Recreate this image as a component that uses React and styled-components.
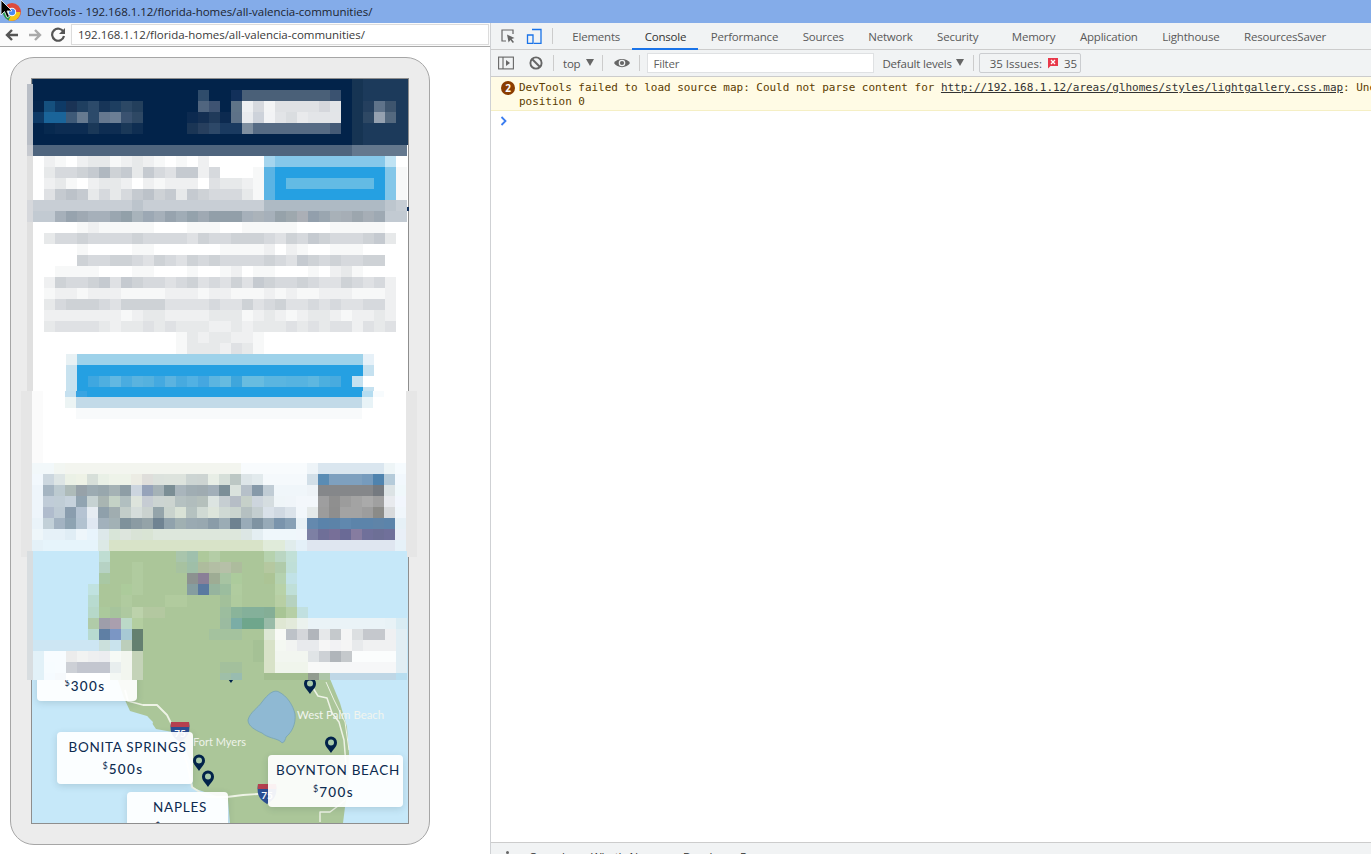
import React from 'react';
import styled, { createGlobalStyle } from 'styled-components';

const Global = createGlobalStyle`
  html, body { margin: 0; padding: 0; background: #fff; overflow: hidden; }
  * { box-sizing: border-box; }
`;

const UI = `"Open Sans", "Noto Sans", "Liberation Sans", sans-serif`;

const Root = styled.div`
  position: relative; width: 1371px; height: 854px; overflow: hidden;
  display: flex; flex-direction: column; font-family: ${UI}; color: #333;
`;
const TitleBar = styled.div`
  height: 23px; background: #84ace9; display: flex; align-items: center; padding-left: 3px; gap: 6px;
  font-size: 11.5px; letter-spacing: -0.03px; color: #1c2430; flex: none;
`;
const Body = styled.div`flex: 1; display: flex; min-height: 0;`;
const LeftPane = styled.div`width: 490px; flex: none; display: flex; flex-direction: column;`;
const NavBar = styled.div`
  height: 24px; flex: none; display: flex; align-items: center; padding: 0 1px 0 5px; background: #fbfbfb;
  border-bottom: 1px solid #a8a8a8;
`;
const NavIcons = styled.div`display: flex; align-items: center; gap: 9px; width: 66px; flex: none;`;
const UrlBox = styled.div`
  flex: 1; height: 21px; background: #fff; border: 1px solid #dcdcdc; padding-left: 6px;
  font-size: 11.5px; line-height: 19px; letter-spacing: -0.03px; color: #3a3a3a;
`;
const PagePane = styled.div`flex: 1; padding: 10px 0 0 10px; background: #fff;`;
const Phone = styled.div`
  position: relative; width: 420px; height: 788px; padding: 20px; background: #ececec;
  border: 1px solid #a6a6a6; border-radius: 24px;
`;
const Screen = styled.div`
  position: relative; width: 378px; height: 746px; border: 1px solid #8e8e8e; overflow: hidden; background: #fff;
`;
const MapArt = styled.svg`position: absolute; left: 0; top: 0; display: block;`;
const Mosaic = styled.svg`position: absolute; left: -1px; top: -1px; display: block; pointer-events: none;`;
const PlaceCard = styled.div`
  position: absolute; left: ${p => p.$x - 32}px; top: ${p => p.$y - 79}px; width: ${p => p.$w}px; height: 52px;
  background: rgba(255,255,255,.93); border-radius: 4px; box-shadow: 0 2px 7px rgba(40,60,70,.16);
  display: flex; flex-direction: column; align-items: center; justify-content: ${p => p.$end ? 'flex-end' : 'flex-start'};
  padding: ${p => p.$end ? '0 0 6px' : '7px 0 0'}; font-family: Lato, sans-serif; color: #0d2b50;
`;
const PlaceName = styled.div`font-size: 13.5px; line-height: 17px; letter-spacing: 0.72px; white-space: nowrap; font-weight: 400; margin-left: 5px;`;
const PlacePrice = styled.div`
  margin: 3.5px 4px 0 0; font-size: 13.5px; line-height: 18px; letter-spacing: 1.4px; font-weight: 500;
  sup { font-size: 9px; font-weight: 400; vertical-align: 5px; line-height: 0; letter-spacing: 1px; }
`;
const DevTools = styled.div`flex: 1; display: flex; flex-direction: column; border-left: 1px solid #cfd1d4; min-width: 0;`;
const TabBar = styled.div`
  height: 27px; flex: none; display: flex; align-items: stretch; background: #f1f3f4; border-bottom: 1px solid #ccc; padding-left: 9px;
`;
const IconSlot = styled.div`
  display: flex; align-items: center; justify-content: center; flex: none; width: ${p => p.$w}px; margin-left: ${p => p.$ml || 0}px;
`;
const Divider = styled.div`
  width: 1px; height: 16px; background: #ccc; align-self: center; flex: none; margin: 0 ${p => p.$r ?? 7}px 0 ${p => p.$l ?? 7}px;
`;
const Tab = styled.div`
  flex: none; padding: 0 12.25px; margin-left: ${p => p.$gap || 0}px; height: 27px; line-height: 27px; font-size: 11.5px; letter-spacing: -0.2px;
  color: ${p => p.$active ? '#333' : '#5a5a5a'};
  box-shadow: ${p => p.$active ? 'inset 0 -2px 0 #1a73e8' : 'none'};
`;
const Toolbar = styled.div`
  height: 27px; flex: none; display: flex; align-items: center; background: #f1f3f4; border-bottom: 1px solid #ccc; padding-left: 7px;
  font-size: 11.5px; letter-spacing: -0.2px; color: #555;
`;
const Select = styled.div`
  display: flex; align-items: center; gap: ${p => p.$gap || 6}px; flex: none; margin-left: ${p => p.$ml || 0}px;
  &::after { content: ''; border-left: 4px solid transparent; border-right: 4px solid transparent; border-top: 7px solid #666; margin-top: -1px; }
`;
const Filter = styled.div`
  width: 227px; height: 20px; flex: none; background: #fff; border: 1px solid #dfe1e3; padding-left: 5px; line-height: 20px; color: #5f5f5f;
`;
const IssueBadge = styled.div`
  width: 102px; height: 20px; flex: none; display: flex; align-items: center; gap: 5px; padding-left: 10px;
  border: 1px solid #cbcdd0; border-radius: 2px; color: #555; letter-spacing: 0;
`;
const Message = styled.div`
  height: 34px; flex: none; position: relative; background: #fffbe5; border-bottom: 1px solid #f5efc4; padding: 4px 0 0 28px;
  font-family: "DejaVu Sans Mono", "Liberation Mono", monospace; font-size: 11px; letter-spacing: -0.03px; line-height: 14px; color: #5c3c00; white-space: nowrap; overflow: hidden;
  a { color: #333; text-decoration: underline; }
`;
const CountDot = styled.span`
  position: absolute; left: 10px; top: 4px; width: 14px; height: 14px; border-radius: 50%; background: #8a3c00; color: #fff;
  font: 700 10px/14px "Open Sans", sans-serif; text-align: center;
`;
const Prompt = styled.div`height: 20px; flex: none; padding: 5px 0 0 9px; display: flex; align-items: flex-start;`;
const ConsoleArea = styled.div`flex: 1; background: #fff;`;
const Drawer = styled.div`
  height: 12px; flex: none; background: #f1f3f4; border-top: 1px solid #ccc; overflow: hidden; position: relative;
  display: flex; font-size: 11.5px; color: #333; padding-left: 38px; line-height: 19px; letter-spacing: -0.1px; padding-top: 4px;
`;
const DrawerTab = styled.span`flex: none; width: ${p => p.$w}px; white-space: nowrap;`;
const DrawerDot = styled.span`position: absolute; left: 15px; top: 8px; width: 3px; height: 3px; border-radius: 50%; background: #666;`;
const CursorArt = styled.svg`position: absolute; left: 0; top: 0; display: block;`;

const L = 'abc699', S = 'c6e8f9', N = '02234a', M = '1c3a5b';
const gray = { 0: 'ffffff', 1: 'f7f8f8', 2: 'eff0f1', 3: 'e7e9ea', 4: 'dfe1e4', 5: 'd6d9dd', 6: 'ced2d6', 7: 'c5cad0', 8: 'bcc2c9', 9: 'b0b8c0' };
const BL = '25a0e2', LB = '84c7e9', D = '5bb4e4', E = '63bbe4';

const A = [
  [79, `${N}*29 163453 ${M}*4`],
  [90, `${N}*15 2f4c6b ${N}*2 12305a 4a6078*8 3a5270 ${N} 163453 ${M}*4`],
  [101, `04254c 15507e 0e3a66 1a3355 1f3f60 2c4a6a 173558 1d3e60 2c4865 233f5c ${N}*5 50657f 3e5372 ${N} 5f7488 eef0f2 d6d9de f3f4f5 dfe1e4*4 d5d7dc e2e5e8 ${N} 163453 243f5e 5f738a 3e556e ${M}`],
  [112, `0e3a66 1a6499*2 3e5a78 667a90 2c4a6a 66788f 6c7f95 3a5270 2e4864 ${N}*4 0c2a50 142f52 203a5a 0c2a50 5e7288 e9ebee cdd2da f2f3f5 e2e4e7 dadde0 e9eaec e3e5e8*3 ${N} 163453 2e4864 95a1b0 54697f ${M}`],
  [123, `${N} 07294f 0c2c52*3 1a3858 0e2d52*2 1a3858 0f2e52 ${N}*4 1a3555 273f5e 2d4868 1a3a60*2 7f8fa0 566b84*7 445a76 ${N} 163453 ${M}*4`],
  [134, `${N}*29 163453 ${M}*4`],
  [145, `4f657e*29 64788e*5`],
  [156, `~021023312321010200000 a5d5ee 86c8ea*10 bfe3f4 ffffff`],
  [167, `~035567967375477250001 ${D} ${BL}*10 ${LB} f7f8f8`],
  [178, `~023102332021222043321 ${D} ${BL} ${E}*8 ${BL} ${LB} f7f8f8`],
  [189, `~047873535786737655531 ${D} ${BL}*10 ${LB} f7f8f8`],
  [200, `c8ced5*9 bcc4cc c8ced5*11 aebac4*11 bdc6ce c6cdd4`],
  [211, `c2cad2*2 a6b0ba 97a3ae 9fa9b3 a6b0ba a6b0ba 9aa6b0 92a0a9 a8b3bb 9ca8b4 a6b0ba 97a3ae a0acb6 94a2ac 9fa9b3 929fa9 929fa9 929fa9 a6b0ba abb3ba a6b0ba 96a2aa 9ea8ae abafb6 929fac 9aa6b0 a8b1b8 a6aeb6 9ca6ae a6aeb6 9ea9b3 c2cad2*2`],
  [222, `~0000121111100011100111110001111100`],
  [233, `~0355655556555546556665465765556730`],
  [244, `~0000100001100000011112021001110000`],
  [255, `~0000655665465465655556547656556600`],
  [266, `~0011110001100010012011000102310000`],
  [277, `~0265567476554564546476556544654520`],
  [288, `~0122122211112221221112121122211120`],
  [299, `~0356665466664444544645644545445520`],
  [310, `~0222222212332222333123212332122320`],
  [321, `~0344443233434333223233343434424340`],
  [332, `~0000000000000132332210000000000000`],
  [343, `~0000000000000133324310000000000000`],
  [354, `ffffff*3 e8f1f4 9ed2ea*26 e7f1f8 ffffff*3`],
  [365, `ffffff*3 c8e2ef ${BL}*26 c5e1f0 ffffff*3`],
  [376, `ffffff*3 c8e2ef ${BL} 3fa7e0 4fafe0 62b8e2 4aace0 5ab3df 55b1de 44a9e0 5bb3e0 47aadf 52b1e3 45a7e0 5cb5e0 66bbe0 3fa6dc 68bce0*2 5ab5e0*2 56b3e0*2 5eb7e0 4cafdf 48abdf ${BL} c5e1f0 ffffff*3`],
];
const C = [
  [463, `f2f8fa*2 f2f6f2 f3f5ef*16 f8fbfd*6 eef4f8 dae6ef*6 eef5f7 f6fbfe`],
  [474, `f2f8fd ccd7df dde5e5 ebf1e6 eef2e6 d7dfd9 e9f0e6 eef3e9 eef3e9 ececE4 dfdedb dce2dd dde3dd dde3dd cdd5d3 cdd4d2 e8eee6 d6dfd9 bcc7c4 dde5e8 e2eaed f5f9fc*4 d2dfe8 5a8cb4 7ea0bf*3 769bbd 4f83ae b5cbda f2f8fd`],
  [485, `eef5fb a5b5c2 bccad0 aebbb9 97a2a9 9cabb2 98a7ad a5b2b5 8e9ea6 ccd5df 96a3ba a5b2b7 7b8e95 a9b5bc a0adb3 9fabb1 a2afb9 7c8f98 dae2dd b6c0c9 8699a9 c0ccd5 f0f6fa*3 eef3f7 85878a*5 757a80 dce3e5 f0f8fb`],
  [496, `eef5fb c0ccd8 c0cdd6 c6d2dc 91a4b1 c6d2d2 a9b5b2 c4d2c6 b1bfc0 dde4dc c6ccd3 ccd4d2 ccd4d0 b5c1c1 b1bdbd b5c0bc dce4e1 c6ced2 b6bdc6 c6d0c9 cdd5dd d5dde0 eff5f8 f0f5f9 f3f7fb f3f7fb 9e9e9f 8f8f8f 9c9c9c a3a3a3 aaaaaa a0a0a0 e8eaee f2f6fd`],
  [507, `eef5fb b0bccd bdcad4 8a9dae b5c3d2 e6ecf2 8fa0ab a0adb0 c2cdc9 d5dddb cad2cf 94a4aa c9d3cd d9e2d6 b5c2c0 d0dad4 dde5db cfd9d4 cad4ce b5c0c1 c4ced0 d9e1e9 d0d9e2 dbe3ea f2f7fb e4e9e9 9c9c9c 8e8e8e a3a3a3 a3a3a3 9d9d9d 8b8b88 d8dadc f0f6fb`],
  [518, `eaf3f9 c2d0d8 a3b3c2 8ea3b2 b2c2d0 e0e8f2 a2b1bc a2b1b5 7e919b 8b9ba3 94a3a8 6f8392 90a2ac a0b0b2 9aaab2 98a8b0 8a9ca8 9bacb5 6e8290 99abb8 7f93a2 97aab8 7a94ac 87a0b5 e8f1f6 6489ae 5a83aa 5c83a8 6088ae 5c84aa 5c84aa 5f84a8 5c84aa e6f0f6`],
  [529, `eef6fa e6f1f8*2 e0edf5 eef6fb e8f4fc dde8ea d8e5d8 dde5dd d9e3d6 d9e4d4 dde7dc*8 dce6e4 e4eef2 eff7fb*3 f0f6fb 7d80a4 6f6f98 776f98 6a6a96 867ca0 70709a 6d6f96 70709a e9eff7`],
  [540, `e4f1f8 e6f4fb*5 dce9e6 d8e3c8*14 e0ebda*2 e0ecec e4f0f8 dfe6f0*8 e6f1f8`],
];
const DD = [
  [551, `${S}*6 bfddd2 ${L}*6 a9c5ac 9fc0ad aec99b b4cda6 ${L}*4 b6d2ae bad6c2 c1e0d7 ${S}*10`],
  [562, `${S}*6 b6d2c4 ${L}*2 b0cb9f ${L}*3 a7c2a0 9fbfa8 aebc9d b3bea4 b6c0a8 adbc9d ${L}*2 b5c8a0 b0cbaa bfdfd8 ${S}*10`],
  [573, `${S}*6 a9c8a4 ${L}*2 b0cb9f ${L}*4 8c9290 8a7f97 9eac94 a7c4a2 accb9c ${L}*2 acc495 b5d2b0 c1e2e7 ${S}*10`],
  [584, `${S}*5 c0e2e0 ${L}*2 accb9b b0cb9f ${L}*4 859da0 5a79a0 96b49e 9bbd9e b0cc9f ${L}*3 b8d2a8 bfdfd8 ${S}*10`],
  [595, `${S}*5 b8dbd0 ${L}*2 b0cb9f ${L}*3 b1cb9e*2 ${L}*3 a2c09a afcb9e ${L}*3 b8cfa4 b6d2c0 ${S}*10`, 12],
  [607, `${S}*5 b6d8c9 abc99c a6c49c aec9a0 bcd2ab b3c8a0*2 ${L}*5 9cbd9e 8ab49a 84b09a*2 84ae96 a8c595 b6cfa6 c1e0e0 ${S}*9`],
  [618, `${S}*5 b0cba8 9e9eaa aa9fae bcd9c8 b3cea0 ${L}*7 9bbba0 7bada6 6fa68c*2 99bba8 dfe7d3 e3eadb ebf2ee eaf3f7*7 e8f2f6 d9ecf3`],
  [629, `${S}*5 b7dad0 5f7fa4 7b96c4 a7c9d4 648070 ${L}*6 a4c29e*3 ${L}*2 dde7d5 f8faf6 bdc2c8 d4d6da b1b5bb e6e8ea c5c9cc f4f5f5 dcdfe1 c5c8cd*2 eff0f2 e1eef4`],
  [640, `cde6f3*6 cbe0dc c9e3ed bccebb 648070 ${L}*10 a5c195 d8e2c8 f4f8f2 f2f4f2 e8eaed*2 f6f6f6 f2f2f4 f5f5f5 e8eaec f0f1f2*3 e1eef4`],
  [651, `e2f1f8 f8fcff*2 ececec f2f3f2 eeeff0 ecedf0 f6faf6 f2f6ef c4d3b8 ${L}*10 a5c195 d8e2c8 f2f6f0*3 e0e4e6 cdd1d5 b0b5ba c5c9cc fbfdfd*4 e1eef4`],
  [662, `e2f1f8 f7fcff f8fcff cdd0d6 c3c6cf*3 e8eeee f2f6ef c4d3b8 ${L}*7 a3c09c*2 ${L}*2 d8e2c8 f0f5ec*3 f8f9f8*2 f6f7f8*6 e1eef4`],
];

function expand(spec) {
  const out = [];
  spec.trim().split(/\s+/).forEach(t => {
    if (t[0] === '~') { for (const ch of t.slice(1)) out.push(gray[ch]); return; }
    const [c, n] = t.split('*');
    for (let i = 0; i < (n ? +n : 1); i++) out.push(c);
  });
  return out;
}
const Cells = ({ rows, x0, h = 11 }) => rows.flatMap(([y, spec, hh]) =>
  expand(spec).map((c, i) => <rect key={`${y}-${x0}-${i}`} x={x0 + i * 11} y={y} width="11" height={hh || h} fill={'#' + c} />));

const Pin = ({ x, y }) => (
  <g transform={`translate(${x} ${y})`}>
    <path d="M0 0C-1.5-3.2-6-6-6-10.6A6 6 0 0 1 6-10.6C6-6 1.5-3.2 0 0Z" fill="#02234a" />
    <circle cx="0" cy="-10.6" r="3" fill="#a9cbaa" />
  </g>
);

const Shield = ({ x, y, label }) => (
  <g transform={`translate(${x} ${y})`}>
    <path d="M1 0H19C20 8 20 14 10 20C0 14 0 8 1 0Z" fill="#2c4f94" />
    <path d="M1 0H19L19.4 5H.6Z" fill="#b5404f" />
    <text x="10" y="15" textAnchor="middle" fontFamily="Lato, sans-serif" fontWeight="700" fontSize="10" fill="#fff">{label}</text>
  </g>
);

const MapDrawing = () => (
  <MapArt width="376" height="744" viewBox="32 79 376 744">
    <rect x="32" y="79" width="376" height="744" fill={'#' + S} />
    <rect x="32" y="79" width="376" height="66" fill={'#' + M} />
    <rect x="32" y="145" width="376" height="406" fill="#fff" />
    <path fill={'#' + L} d="M110 551H310L322 680 328 674 340 703 347 727 349 753 348 790 345 807 343 823H230L228 800 193 788 190 760 178 733 156 729 147 716 130 711 124 698 118 680 108 640Z" />
    <path fill="#c6e8f9" d="M147 716L153 722 151 730 158 734 148 732Z" />
    <path fill="#8fb9d3" stroke="#7ea9b4" strokeWidth="1" d="M248 720C250 712 258 708 262 702 268 694 274 689 279 692 287 696 293 705 295 714 296 724 292 732 286 737 285 741 283 745 280 741 275 738 268 738 262 733 255 730 248 726 248 720Z" />
    <g fill="none" stroke="#eef3e6" strokeWidth="1.8" strokeLinejoin="round">
      <path d="M125 690L128 701 143 705 157 705 167 715 173 727 180 745 187 763 192 787 207 797 227 797 243 795 258 794" />
      <path d="M313 688L318 696 327 698 332 713 339 722 344 740 346 765" strokeWidth="1.5" />
      <path d="M326 682L334 700 345 722 349 750" strokeWidth="1" />
      <path d="M320 822V812H330L338 806 345 800" strokeWidth="1.4" />
    </g>
    <path d="M258 794H272" stroke="#eef3e6" strokeWidth="1.5" />
    <Shield x={170} y={722} label="75" />
    <Shield x={257} y={784} label="75" />
    <text x="193" y="746" fontFamily="Lato, sans-serif" fontSize="11" fill="#eef3ea">Fort Myers</text>
    <text x="297" y="719" fontFamily="Lato, sans-serif" fontSize="11.4" fill="#f1f5ef">West Palm Beach</text>
    <Pin x={199} y={771} />
    <Pin x={208} y={787} />
    <Pin x={331} y={753} />
    <Pin x={310} y={694} />
    <Pin x={231} y={683} />
  </MapArt>
);

const MosaicDrawing = () => (
  <Mosaic width="420" height="788" viewBox="10 57 420 788" shapeRendering="crispEdges">
    <rect x="27" y="84" width="6" height="61" fill="#b9bec6" />
    <rect x="27" y="145" width="6" height="11" fill="#c6c9cf" />
    <rect x="27" y="156" width="6" height="235" fill="#e0e0e0" />
    <rect x="27" y="200" width="6" height="22" fill="#d6d8dc" />
    <Cells rows={A} x0={33} />
    <rect x="66" y="387" width="11" height="4" fill="#c8e2ef" />
    <rect x="77" y="387" width="286" height="4" fill={'#' + BL} />
    <rect x="363" y="387" width="11" height="4" fill="#c5e1f0" />
    <rect x="407" y="207" width="2" height="4" fill="#12305a" />
    <rect x="21" y="391" width="11" height="166" fill="#e6e6e6" />
    <rect x="406" y="391" width="11" height="166" fill="#e6e6e6" />
    <rect x="32" y="391" width="374" height="72" fill="#fff" />
    <rect x="32" y="391" width="11" height="72" fill="#fbfbfb" />
    <rect x="65" y="391" width="11" height="6" fill="#c5e0ef" />
    <rect x="76" y="391" width="286" height="6" fill={'#' + BL} />
    <rect x="76" y="391" width="11" height="6" fill="#38a4e2" />
    <rect x="362" y="391" width="11" height="6" fill="#b4dcf0" />
    <rect x="373" y="391" width="11" height="6" fill="#f7fbfd" />
    <rect x="65" y="397" width="11" height="11" fill="#ecf4f4" />
    <rect x="76" y="397" width="286" height="11" fill="#c2dae8" />
    <rect x="362" y="397" width="11" height="11" fill="#e8f3f7" />
    <rect x="76" y="408" width="286" height="11" fill="#f8fafb" />
    <Cells rows={C} x0={32} />
    <rect x="27" y="551" width="6" height="129" fill="#d8dde0" />
    <Cells rows={DD} x0={33} />
    <Cells h={7} x0={33} rows={[[673, `e2f1f8 f6fbff f6f9fc ffffff*4 f4f8f4 f2f6ef c4d3b8`]]} />
    <Cells h={7} x0={220} rows={[[673, `9fbfa8 99bcb0`]]} />
    <Cells h={7} x0={264} rows={[[673, `a3be90*4 929c90 adc5a8 bfd7e6*6 b8def0`]]} />
  </Mosaic>
);

const ChromeLogo = () => (
  <svg width="18" height="18" viewBox="0 0 18 18">
    <circle cx="9" cy="9" r="9" fill="#dd4b3e" />
    <path d="M9 9L1.2 4.5A9 9 0 0 0 5.7 17.4L9.4 11Z" fill="#1e9e52" />
    <path d="M9 9H17.4A9 9 0 0 1 5.7 17.4Z" fill="#f5c518" />
    <circle cx="9" cy="9" r="4.2" fill="#fff" />
    <circle cx="9" cy="9" r="3.2" fill="#4a8af4" />
  </svg>
);
const Arrow = ({ flip, color }) => (
  <svg width="14" height="14" viewBox="0 0 14 14">
    <path d={flip ? 'M1 7H11M7 2L12 7 7 12' : 'M13 7H3M7 2L2 7 7 12'} fill="none" stroke={color} strokeWidth="2.4" />
  </svg>
);
const Reload = () => (
  <svg width="15" height="15" viewBox="0 0 15 15">
    <path d="M12.5 5A6 6 0 1 0 13 9" fill="none" stroke="#555" strokeWidth="2.2" />
    <path d="M14 1V7H8Z" fill="#555" />
  </svg>
);
const InspectIcon = () => (
  <svg width="16" height="16" viewBox="0 0 16 16">
    <path d="M6 13H2V2H13V6" fill="none" stroke="#666" strokeWidth="1.2" />
    <path d="M7 6.5L14.5 10 11.6 11 14 14 12.8 15 10.4 12 8.6 14.4Z" fill="#666" />
  </svg>
);
const DeviceIcon = () => (
  <svg width="16" height="16" viewBox="0 0 16 16">
    <path d="M6 1.5H15V15.5H8M1.5 7H7V15.5H1.5Z" fill="none" stroke="#1a73e8" strokeWidth="1.3" />
  </svg>
);
const SidebarIcon = () => (
  <svg width="16" height="14" viewBox="0 0 16 14">
    <rect x=".6" y="1.1" width="14.8" height="11.8" fill="none" stroke="#666" strokeWidth="1.1" />
    <path d="M5 1V13" stroke="#666" strokeWidth="1.1" />
    <path d="M8 4L12 7 8 10Z" fill="#666" />
  </svg>
);
const BlockIcon = () => (
  <svg width="14" height="14" viewBox="0 0 14 14">
    <circle cx="7" cy="7" r="5.6" fill="none" stroke="#666" strokeWidth="1.9" />
    <path d="M3 3L11 11" stroke="#666" strokeWidth="1.9" />
  </svg>
);
const EyeIcon = () => (
  <svg width="16" height="12" viewBox="0 0 16 12">
    <path d="M0 6C3 .5 13 .5 16 6 13 11.5 3 11.5 0 6Z" fill="#666" />
    <circle cx="8" cy="6" r="3.3" fill="#f1f3f4" />
    <circle cx="8" cy="6" r="2.1" fill="#666" />
  </svg>
);
const IssueIcon = () => (
  <svg width="12" height="12" viewBox="0 0 12 12">
    <path d="M1 1H11V9H3.5L1 11.5Z" fill="#e8384a" />
    <path d="M4 3L8 7M8 3L4 7" stroke="#fff" strokeWidth="1.3" />
  </svg>
);
const Chevron = () => (
  <svg width="8" height="10" viewBox="0 0 8 10">
    <path d="M1.5 1L5.5 5 1.5 9" fill="none" stroke="#3b7df0" strokeWidth="1.8" />
  </svg>
);

const places = [
  { x: 37, y: 649, w: 100, price: '300s', end: true },
  { x: 57, y: 732, w: 136, name: 'BONITA SPRINGS', price: '500s' },
  { x: 268, y: 755, w: 135, name: 'BOYNTON BEACH', price: '700s' },
  { x: 127, y: 792, w: 101, name: 'NAPLES', price: '600s' },
];
const tabs = [
  ['Elements'], ['Console', 0, true], ['Performance'], ['Sources'], ['Network'], ['Security'], ['Memory', 9], ['Application'], ['Lighthouse'], ['ResourcesSaver'],
];

export default function App() {
  return (
    <Root>
      <Global />
      <TitleBar><ChromeLogo />DevTools - 192.168.1.12/florida-homes/all-valencia-communities/</TitleBar>
      <Body>
        <LeftPane>
          <NavBar>
            <NavIcons><Arrow color="#555" /><Arrow flip color="#aaa" /><Reload /></NavIcons>
            <UrlBox>192.168.1.12/florida-homes/all-valencia-communities/</UrlBox>
          </NavBar>
          <PagePane>
            <Phone>
              <Screen>
                <MapDrawing />
                {places.map(p => (
                  <PlaceCard key={p.price} $x={p.x} $y={p.y} $w={p.w} $end={p.end}>
                    {p.name && <PlaceName>{p.name}</PlaceName>}
                    <PlacePrice><sup>$</sup>{p.price}</PlacePrice>
                  </PlaceCard>
                ))}
              </Screen>
              <MosaicDrawing />
            </Phone>
          </PagePane>
        </LeftPane>
        <DevTools>
          <TabBar>
            <IconSlot $w={16}><InspectIcon /></IconSlot>
            <IconSlot $w={35}><DeviceIcon /></IconSlot>
            <Divider $l={1} $r={7} />
            {tabs.map(([label, gap, active]) => <Tab key={label} $gap={gap} $active={active}>{label}</Tab>)}
          </TabBar>
          <Toolbar>
            <IconSlot $w={16}><SidebarIcon /></IconSlot>
            <IconSlot $w={14} $ml={15}><BlockIcon /></IconSlot>
            <Divider $l={10} $r={9} />
            <Select>top</Select>
            <Divider $l={8} $r={10} />
            <IconSlot $w={17}><EyeIcon /></IconSlot>
            <Divider $l={9} $r={7} />
            <Filter>Filter</Filter>
            <Select $ml={8} $gap={4}>Default levels</Select>
            <Divider $l={9} $r={5} />
            <IssueBadge>35 Issues: <IssueIcon /> 35</IssueBadge>
          </Toolbar>
          <Message>
            <CountDot>2</CountDot>
            DevTools failed to load source map: Could not parse content for <a>http://192.168.1.12/areas/glhomes/styles/lightgallery.css.map</a>: Unexpected token
            <br />position 0
          </Message>
          <Prompt><Chevron /></Prompt>
          <ConsoleArea />
          <Drawer>
            <DrawerDot />
            <DrawerTab $w={62}>Console</DrawerTab>
            <DrawerTab $w={92}>What's New</DrawerTab>
            <DrawerTab $w={130}>Developer Resources</DrawerTab>
          </Drawer>
        </DevTools>
      </Body>
      <CursorArt width="14" height="20" viewBox="0 0 14 20">
        <path d="M1 0V15L4.5 11.5 7 17.5 9.5 16.5 7 11H12Z" fill="#000" stroke="#fff" strokeWidth=".8" />
      </CursorArt>
    </Root>
  );
}
